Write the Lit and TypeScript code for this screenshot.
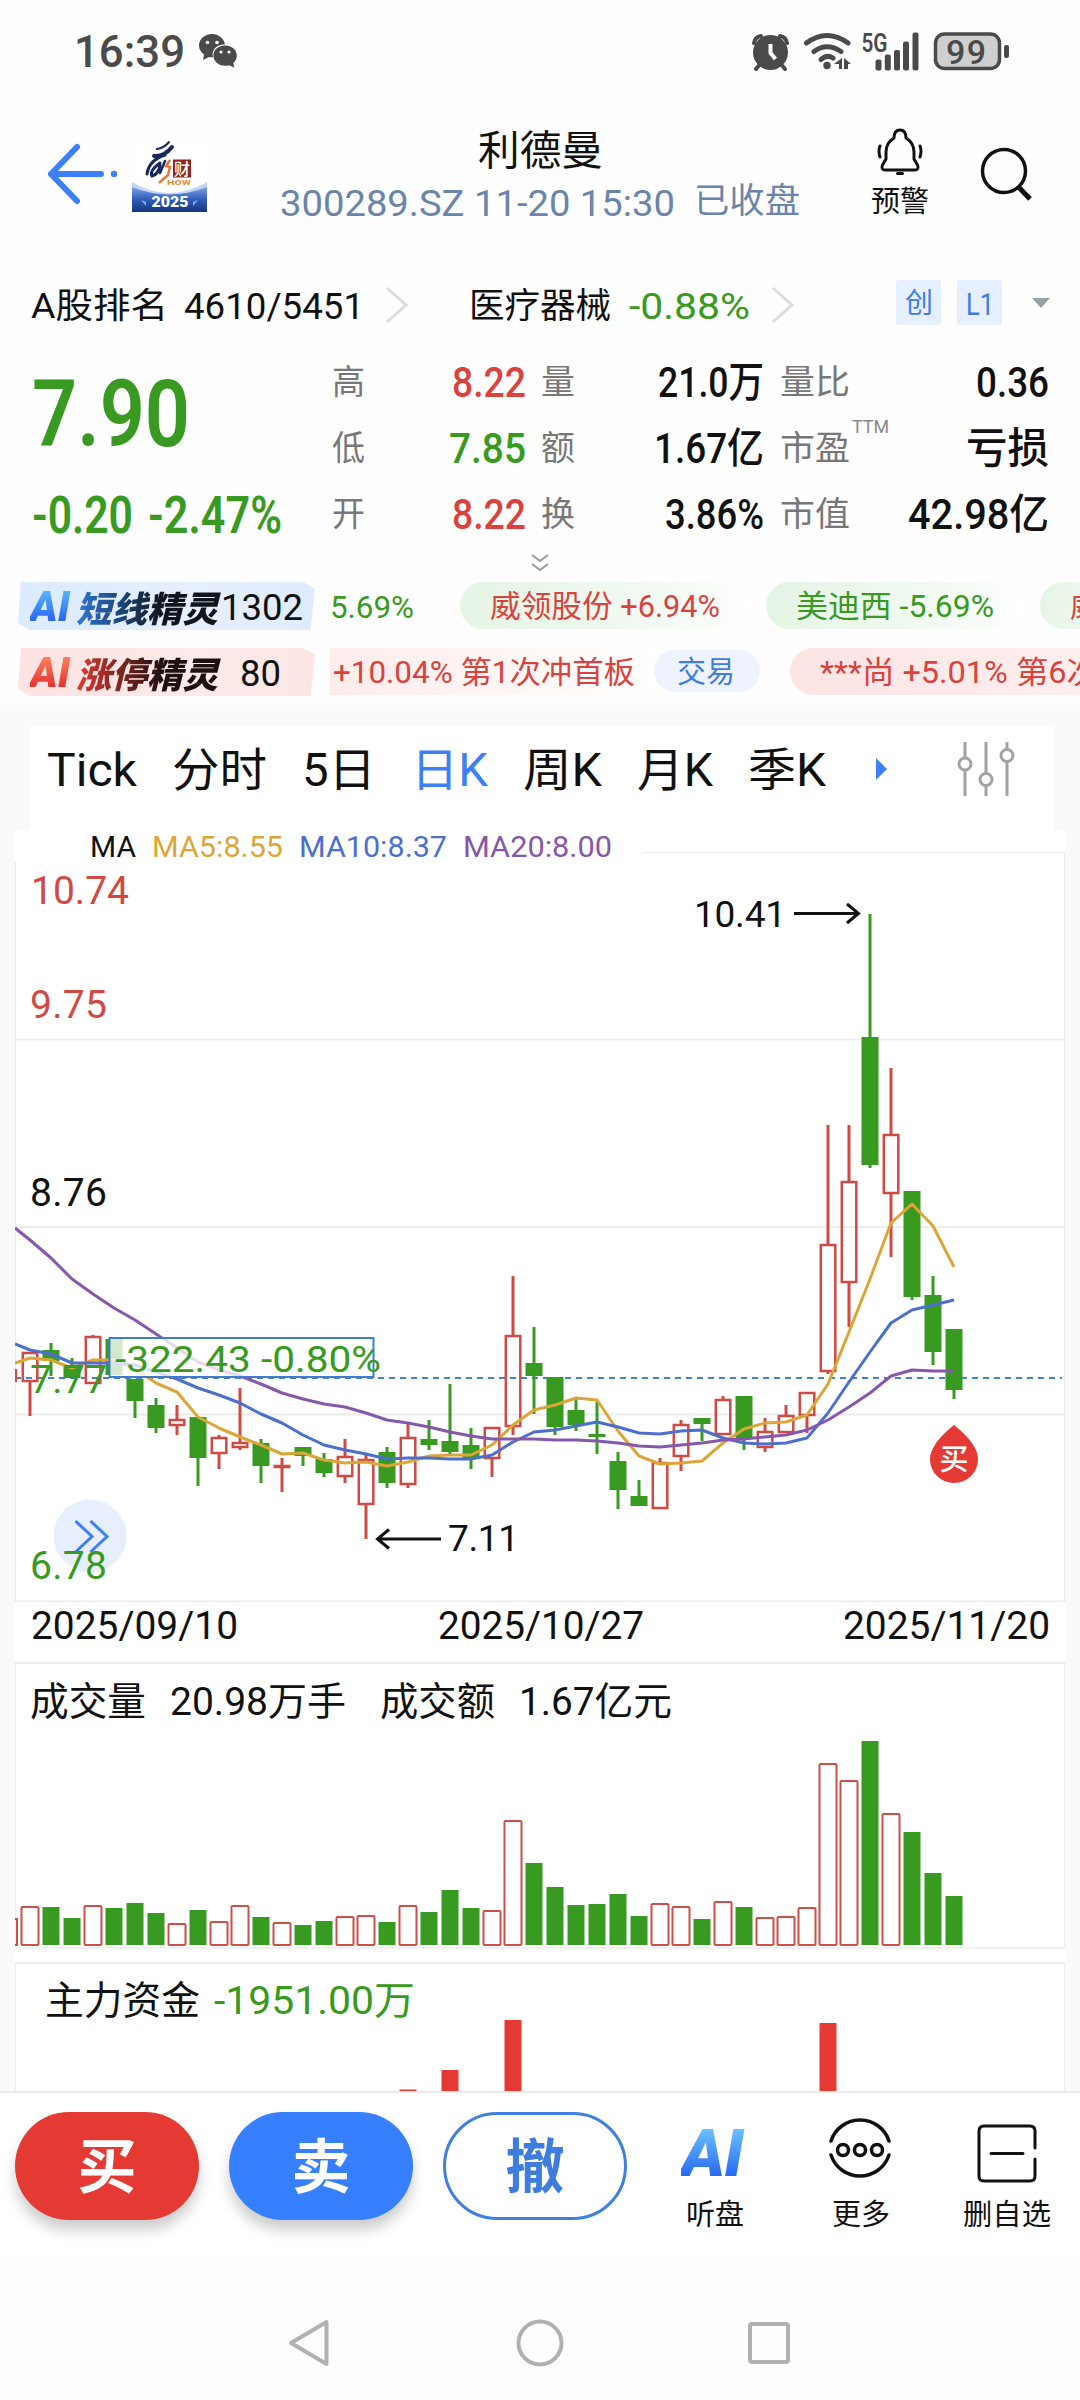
import { html, svg, css, LitElement } from 'lit';
import { customElement, property } from 'lit/decorators.js';

// [up, high, bodyTop, bodyBottom, low] in chart units
type Candle = [number, number, number, number, number];

const FIRST_X = 30;
const STEP = 21;

const CANDLES: Candle[] = [
  [1, 500, 500, 529, 564], [0, 491, 498, 509, 524], [0, 506, 513, 526, 526],
  [1, 483, 484, 531, 531], [0, 487, 487, 523, 523], [0, 527, 527, 549, 566],
  [0, 546, 553, 576, 581], [1, 553, 567, 573, 583], [0, 565, 565, 606, 634],
  [1, 583, 585, 601, 617], [1, 536, 590, 595, 598], [0, 587, 591, 614, 631],
  [1, 606, 613, 615, 640], [0, 595, 595, 604, 614], [0, 601, 607, 621, 625],
  [1, 587, 604, 624, 631], [1, 601, 607, 652, 687], [0, 595, 600, 631, 636],
  [1, 572, 585, 632, 636], [0, 568, 587, 593, 598], [0, 532, 589, 600, 602],
  [0, 576, 593, 606, 617], [1, 575, 575, 606, 625], [1, 424, 483, 574, 583],
  [0, 475, 511, 524, 562], [0, 525, 525, 575, 583], [0, 546, 558, 573, 579],
  [0, 550, 582, 585, 602], [0, 600, 609, 638, 657], [0, 628, 644, 654, 654],
  [1, 606, 610, 656, 657], [1, 568, 572, 604, 619], [0, 566, 566, 572, 589],
  [1, 544, 547, 582, 582], [0, 544, 544, 587, 598], [1, 566, 579, 595, 600],
  [1, 553, 563, 580, 580], [1, 540, 540, 563, 581], [1, 273, 392, 519, 522],
  [1, 273, 329, 430, 475], [0, 62, 185, 313, 316], [1, 216, 282, 341, 405],
  [0, 339, 339, 445, 448], [0, 424, 443, 500, 513], [0, 477, 477, 538, 547],
];

const MA5 = [506, 508, 516, 508, 508, 517, 531, 540, 565, 576, 585, 593, 602, 601, 608, 611, 610, 614, 610, 604, 603, 603, 593, 573, 558, 553, 546, 548, 579, 604, 612, 611, 609, 591, 577, 571, 570, 563, 532, 480, 427, 371, 352, 374, 415];
const MA10 = [498, 502, 511, 511, 511, 513, 520, 527, 536, 543, 551, 562, 571, 583, 593, 598, 602, 607, 606, 606, 607, 607, 603, 590, 580, 578, 574, 570, 575, 581, 582, 579, 578, 586, 591, 592, 591, 586, 561, 530, 500, 471, 458, 453, 448];
const MA20 = [388, 406, 427, 442, 456, 468, 482, 496, 510, 518, 524, 532, 541, 547, 552, 555, 561, 568, 571, 575, 580, 584, 587, 587, 587, 588, 588, 589, 591, 594, 595, 593, 591, 588, 587, 585, 583, 578, 568, 555, 541, 524, 518, 519, 519];

const VOLUMES = [39, 38, 27, 40, 37, 42, 32, 22, 35, 24, 40, 28, 23, 20, 24, 29, 30, 23, 40, 33, 55, 37, 35, 125, 82, 58, 40, 41, 51, 29, 42, 39, 26, 44, 38, 28, 29, 38, 182, 165, 204, 132, 113, 72, 49];

const FUNDS: Array<[number, number]> = [[18, 1.5], [20, 21], [23, 71], [38, 68]];

const TABS: Array<[string, number]> = [
  ['Tick', 90], ['分时', 95], ['5日', 74], ['日K', 77], ['周K', 79], ['月K', 76], ['季K', 78],
];

const xAt = (i: number) => FIRST_X + STEP * i;

const line = (start: number, values: number[]) =>
  `15,${start} ` + values.map((v, i) => `${xAt(i)},${v}`).join(' ');

// Text set to an exact width
const fit = (text: string, width: number, size: number, cls = '') => html`
  <svg class="fit ${cls}" width=${width} height=${Math.round(size * 1.2)}>
    <text x="0" y=${size * 0.955} font-size=${size} textLength=${width} lengthAdjust="spacingAndGlyphs">${text}</text>
  </svg>
`;

const fitStyles = css`
  .fit {
    display: block;
    flex: none;
    overflow: visible;
    fill: currentColor;
  }

  .red {
    color: #d9423d;
  }

  .green {
    color: #389a20;
  }

  .bold {
    font-weight: 600;
  }

  .medium {
    font-weight: 500;
  }
`;

@customElement('status-bar')
export class StatusBar extends LitElement {
  static override styles = [fitStyles, css`
    :host {
      display: flex;
      align-items: center;
      height: 101px;
      padding: 0 70px 0 74px;
      box-sizing: border-box;
      color: #4a4a4a;
    }

    .wechat {
      margin-left: 14px;
    }

    .icons {
      margin-left: auto;
      overflow: visible;
    }

    svg {
      display: block;
    }
  `];

  override render() {
    return html`
      ${fit('16:39', 111, 43.5, 'medium')}
      <svg class="wechat" width="38" height="34" viewBox="0 0 38 34" fill="#4a4a4a">
        <path d="M13 0C5.800 0 0 5 0 11.500c0 3.700 1.900 6.800 5 9L4 26l6-3c1.300.3 2.500.4 4 .3C12 16 18 10 26 10.500 25 4.500 19.500 0 13 0z"/>
        <path d="M26 11.500c-6.500 0-11.600 4.300-11.600 10S19.500 31.800 26 31.800c1.400 0 2.800-.2 4-.6l5.300 2.300-1-4.200c2.200-2 3.500-4.700 3.500-7.800 0-5.700-5.200-10-11.800-10z"/>
        <g fill="#fff"><circle cx="8.500" cy="8.500" r="1.800"/><circle cx="18" cy="8.500" r="1.800"/><circle cx="22" cy="18" r="1.600"/><circle cx="30" cy="18" r="1.600"/></g>
      </svg>
      <svg class="icons" width="258" height="40" viewBox="752 30 258 40" fill="#4a4a4a">
        <g fill="none" stroke="#4a4a4a" stroke-width="4" stroke-linecap="round">
          <path d="M754 42q1-6 7-7M787 42q-1-6-7-7M761 62l-5 6M780 62l5 6"/>
        </g>
        <circle cx="770.500" cy="51.500" r="17.500"/>
        <path d="M770.500 43v9l5 6" fill="none" stroke="#fff" stroke-width="4"/>
        <g fill="none" stroke="#4a4a4a" stroke-width="5" stroke-linecap="round">
          <path d="M806.500 42Q827 27 848 42M814 50.500Q827 41 841 50.500M821 58.500Q827 53 833 57"/>
        </g>
        <circle cx="827" cy="64.500" r="3.700"/>
        <path d="M842 57v11h-3v-5h-5zM844 57l7 6h-3v5h-4z"/>
        <text class="bold" x="861.500" y="50.500" font-size="25" textLength="26" lengthAdjust="spacingAndGlyphs">5G</text>
        <rect x="875.500" y="58.500" width="6" height="11" rx="2"/>
        <rect x="884.800" y="53.500" width="6" height="16" rx="2"/>
        <rect x="894" y="49" width="6" height="20.500" rx="2"/>
        <rect x="903" y="40.500" width="6" height="29" rx="2"/>
        <rect x="912.500" y="31.500" width="6" height="38" rx="2"/>
        <rect x="935.500" y="33" width="64" height="34.500" rx="9" fill="#cfcfcf" stroke="#4a4a4a" stroke-width="3.500"/>
        <rect x="1004" y="44" width="5" height="13" rx="2"/>
        <text class="medium" x="946" y="62.500" font-size="34" textLength="40">99</text>
      </svg>
    `;
  }
}

@customElement('stock-header')
export class StockHeader extends LitElement {
  static override styles = [fitStyles, css`
    :host {
      display: flex;
      align-items: center;
      height: 149px;
      padding: 0 48px 0 46px;
      box-sizing: border-box;
    }

    .back,
    .search {
      margin-bottom: 3px;
    }

    .logo {
      margin-left: 14px;
    }

    .title {
      display: flex;
      flex-direction: column;
      align-items: center;
      gap: 5px;
      margin: 0 auto 0 73px;
    }

    .sub {
      display: flex;
      gap: 19px;
      color: #6b84a9;
    }

    .alarm {
      display: flex;
      flex-direction: column;
      align-items: center;
      gap: 9px;
      margin: 0 51px 5px 0;
    }
  `];

  override render() {
    return html`
      <svg class="back" width="72" height="62" viewBox="0 0 72 62" fill="none" stroke="#3b80f6" stroke-width="6" stroke-linecap="round" stroke-linejoin="round">
        <path d="M31 4L5 31l26 27M5 31h50"/>
        <circle cx="68" cy="31" r="3.200" fill="#3b80f6" stroke="none"/>
      </svg>
      <svg class="logo" width="75" height="72" viewBox="0 0 75 72">
        <defs>
          <linearGradient id="sea" x1="0" y1="0" x2="0" y2="1">
            <stop offset="0" stop-color="#7f9fe0"/>
            <stop offset=".5" stop-color="#2f5dbd"/>
            <stop offset="1" stop-color="#15357c"/>
          </linearGradient>
        </defs>
        <rect width="75" height="72" fill="#fff"/>
        <path d="M0 42Q37 64 75 42V72H0z" fill="#c3d5f5"/>
        <path d="M0 47Q37 62 75 47V72H0z" fill="url(#sea)"/>
        <g fill="none" stroke="#16285c" stroke-linecap="round">
          <path d="M25 9Q32 8 37 2" stroke-width="2"/>
          <path d="M22 16Q32 17 40 7" stroke-width="4"/>
          <path d="M33 15Q17 20 15 34M28 23Q17 31 20 36Q27 34 28 25" stroke-width="3"/>
          <path d="M33 21L28 33" stroke-width="2.500"/>
        </g>
        <path d="M38 20l-4 6 4 1-2 8-9 8" fill="none" stroke="#e27b35" stroke-width="2.500"/>
        <rect x="41" y="19.500" width="18" height="18" fill="#8b2522"/>
        <text x="42" y="34.500" font-size="16" font-weight="500" fill="#fff">财</text>
        <text x="35" y="45" font-size="8" font-weight="700" textLength="24" lengthAdjust="spacingAndGlyphs" fill="#e08a3a">HOW</text>
        <text x="19.500" y="67" font-size="14" font-weight="900" textLength="37" lengthAdjust="spacingAndGlyphs" fill="#fff">2025</text>
        <path d="M9 60l5 2v4zM66 60l-5 2v4z" fill="#8fb0ee"/>
      </svg>
      <div class="title">
        ${fit('利德曼', 125, 41)}
        <div class="sub">
          ${fit('300289.SZ 11-20 15:30', 395, 37.5)}
          ${fit('已收盘', 106, 35)}
        </div>
      </div>
      <div class="alarm">
        <svg width="46" height="47" viewBox="0 0 46 47" fill="none" stroke="#111" stroke-width="3" stroke-linecap="round" stroke-linejoin="round">
          <path d="M17 10Q17 2 23 2t6 8q8 5 8 14v7l3.500 6q2 5-3 5h-29q-5 0-3-5L9 31v-7q0-9 8-14z"/>
          <path d="M3 18q-2 5 0 11M43 18q2 5 0 11M20.500 45.500h5"/>
        </svg>
        ${fit('预警', 58, 29)}
      </div>
      <svg class="search" width="52" height="54" viewBox="0 0 52 54" fill="none" stroke="#111">
        <circle cx="24" cy="24" r="21.500" stroke-width="3.500"/>
        <path d="M38.500 40L50 52" stroke-width="5"/>
      </svg>
    `;
  }
}

@customElement('quote-board')
export class QuoteBoard extends LitElement {
  static override styles = [fitStyles, css`
    .rank {
      display: flex;
      align-items: center;
      height: 99px;
      padding: 11px 30px 0 31px;
      box-sizing: border-box;
      color: #111;
    }

    .chevron {
      margin-left: 21px;
    }

    .rank-value {
      margin-left: 16px;
    }

    .sector {
      margin-left: 60px;
    }

    .sector-value {
      margin-left: 18px;
    }

    .tag {
      display: flex;
      align-items: center;
      justify-content: center;
      width: 45px;
      height: 45px;
      margin: 0 16px 5px 0;
      border-radius: 3px;
      background: #e6effd;
      color: #3d7de0;
    }

    .tags {
      display: flex;
      margin-left: auto;
    }

    .caret {
      margin: 0 0 4px 14px;
    }

    .quote {
      display: grid;
      grid-template-columns: 300px 194px 15px 223px 16px 269px;
      padding-left: 32px;
    }

    .price {
      display: flex;
      flex-direction: column;
      gap: 15px;
      padding-top: 8px;
    }

    .change {
      display: flex;
      gap: 15px;
    }

    .col {
      display: flex;
      flex-direction: column;
    }

    .cell {
      display: flex;
      align-items: center;
      height: 66px;
    }

    .cell .label {
      color: #777;
    }

    .cell .value {
      margin-left: auto;
    }

    .ttm {
      align-self: flex-start;
      margin: 1px 0 0 2px;
      color: #888;
    }

    .more {
      display: flex;
      justify-content: center;
      height: 35px;
      padding-top: 6px;
      box-sizing: border-box;
    }
  `];

  private cell(label: string, labelWidth: number, value: string, width: number, color = '', note = '') {
    return html`
      <div class="cell">
        ${fit(label, labelWidth, 34, 'label')}
        ${note ? fit(note, 37, 18, 'ttm') : ''}
        ${fit(value, width, /^[\d.%]+$/.test(value) ? 43 : 42, `value medium ${color}`)}
      </div>
    `;
  }

  private chevron() {
    return html`
      <svg class="chevron" width="24" height="38" viewBox="0 0 24 38" fill="none" stroke="#dcdcdc" stroke-width="3">
        <path d="M2 2l19 17L2 36"/>
      </svg>
    `;
  }

  override render() {
    return html`
      <div class="rank">
        ${fit('A股排名', 137, 35.5)}
        <div class="rank-value">${fit('4610/5451', 180, 37.5)}</div>
        ${this.chevron()}
        <div class="sector">${fit('医疗器械', 142, 35.5)}</div>
        <div class="sector-value">${fit('-0.88%', 121, 37.5, 'green')}</div>
        ${this.chevron()}
        <div class="tags">
          <div class="tag">${fit('创', 28, 28)}</div>
          <div class="tag">${fit('L1', 28, 32)}</div>
        </div>
        <svg class="caret" width="18" height="10" viewBox="0 0 18 10"><path d="M0 0h18L9 10z" fill="#9a9fa4"/></svg>
      </div>
      <div class="quote">
        <div class="price green">
          ${fit('7.90', 158, 93, 'bold')}
          <div class="change">
            ${fit('-0.20', 101, 51, 'bold')}
            ${fit('-2.47%', 134, 51, 'bold')}
          </div>
        </div>
        <div class="col">
          ${this.cell('高', 33, '8.22', 74, 'red bold')}
          ${this.cell('低', 33, '7.85', 77, 'green bold')}
          ${this.cell('开', 33, '8.22', 74, 'red bold')}
        </div>
        <span></span>
        <div class="col">
          ${this.cell('量', 34, '21.0万', 106)}
          ${this.cell('额', 34, '1.67亿', 110)}
          ${this.cell('换', 34, '3.86%', 99, 'bold')}
        </div>
        <span></span>
        <div class="col">
          ${this.cell('量比', 70, '0.36', 73, 'bold')}
          ${this.cell('市盈', 70, '亏损', 83, '', 'TTM')}
          ${this.cell('市值', 70, '42.98亿', 141)}
        </div>
      </div>
      <div class="more">
        <svg width="18" height="20" viewBox="0 0 18 20" fill="none" stroke="#9a9a9a" stroke-width="2">
          <path d="M1 2l8 6 8-6M1 11l8 6 8-6"/>
        </svg>
      </div>
    `;
  }
}

@customElement('ai-ticker')
export class AiTicker extends LitElement {
  static override styles = [fitStyles, css`
    :host {
      display: flex;
      flex-direction: column;
      gap: 18px;
      padding: 0 0 9px 18px;
      overflow: hidden;
    }

    .row {
      display: flex;
      height: 48px;
    }

    .badge {
      display: flex;
      align-items: center;
      flex: none;
      width: 297px;
      margin-right: 15px;
      padding-left: 12px;
      box-sizing: border-box;
      background: linear-gradient(90deg, #dcebff, #e6effe 60%, #dfebff);
      clip-path: polygon(1% 0, 96% 0, 100% 14%, 98.5% 100%, 4% 100%, 0 85%);
    }

    .badge.hot {
      background: linear-gradient(90deg, #fde3e1, #fdeae9 60%, #fde7e5);
    }

    .ai,
    .name {
      font-style: italic;
      font-weight: 900;
      color: transparent;
      -webkit-background-clip: text;
      background-clip: text;
      white-space: nowrap;
    }

    .ai {
      width: 46px;
      font-size: 42px;
      background-image: linear-gradient(180deg, #55b4fb 20%, #2a62f0 80%);
    }

    .name {
      width: 145px;
      font-size: 35.5px;
      background-image: linear-gradient(90deg, #2f78d8, #10141c 60%);
    }

    .hot .ai {
      background-image: linear-gradient(180deg, #ff7c5c 20%, #e5322f 80%);
    }

    .hot .name {
      background-image: linear-gradient(90deg, #e03a34, #1c1110 60%);
    }

    .badge.hot .fit {
      margin-left: 19px;
    }

    .stream {
      display: flex;
      flex: 1;
      overflow: hidden;
    }

    .pill {
      display: flex;
      align-items: center;
      flex: none;
      height: 47px;
      padding: 0 30px;
      box-sizing: border-box;
      border-radius: 24px;
      background: linear-gradient(90deg, #e5f4e5, #f3faf3 70%, #fff);
    }

    .pill + .pill {
      margin-left: 16px;
    }

    .pill.cut {
      border-radius: 0;
      padding-left: 0;
      background: none;
    }

    .hot .pill {
      background: linear-gradient(90deg, #fde5e4, #fdf0ef);
    }

    .hot .pill.cut {
      padding: 0 20px 0 3px;
      background: linear-gradient(90deg, #fdecea, #fff);
    }

    .hot .pill.trade {
      height: 42px;
      margin: 2px 14px 0 -1px;
      padding: 0 25px 0 23px;
      background: #eff3fd;
      color: #3d7de0;
    }
  `];

  override render() {
    return html`
      <div class="row">
        <div class="badge">
          <span class="ai">AI</span><span class="name">短线精灵</span>
          ${fit('1302', 82, 37.5)}
        </div>
        <div class="stream">
          <div class="pill cut green">${fit('5.69%', 84, 32)}</div>
          <div class="pill red">${fit('威领股份 +6.94%', 230, 31)}</div>
          <div class="pill green">${fit('美迪西 -5.69%', 198, 31)}</div>
          <div class="pill red">${fit('威', 30, 31)}</div>
        </div>
      </div>
      <div class="row hot">
        <div class="badge hot">
          <span class="ai">AI</span><span class="name">涨停精灵</span>
          ${fit('80', 41, 37.5)}
        </div>
        <div class="stream">
          <div class="pill cut red">${fit('+10.04% 第1次冲首板', 302, 31)}</div>
          <div class="pill trade">${fit('交易', 58, 29.5)}</div>
          <div class="pill red">${fit('***尚 +5.01% 第6次', 279, 31)}</div>
        </div>
      </div>
    `;
  }
}

@customElement('k-chart')
export class KChart extends LitElement {
  static override styles = [fitStyles, css`
    :host {
      display: block;
      padding-top: 21px;
      background: #fafafb;
    }

    svg {
      display: block;
    }

    .tabs {
      display: flex;
      align-items: center;
      gap: 35px;
      height: 104px;
      margin: 0 27px 0 30px;
      padding: 0 38px 18px 17px;
      box-sizing: border-box;
      background: #fff;
    }

    .active {
      color: #3b80f6;
    }

    .arrow {
      margin-left: 15px;
    }

    .sliders {
      margin-left: auto;
    }

    .panel {
      margin: 0 15px;
      background: #fff;
    }

    .framed {
      border-top: 2px solid #ececec;
      box-shadow: inset 1px 0 #eee, inset -1px 0 #eee;
    }

    .legend {
      display: flex;
      align-items: center;
      gap: 16px;
      height: 22px;
      padding: 9px 0 0 75px;
      box-sizing: border-box;
    }

    .dates {
      display: flex;
      justify-content: space-between;
      align-items: center;
      height: 60px;
      padding: 0 15px 16px 16px;
      box-sizing: border-box;
    }

    .heading {
      display: flex;
      align-items: center;
      height: 75px;
      padding: 0 0 2px 15px;
      box-sizing: border-box;
    }

    .heading .fit + .fit {
      margin-left: 24px;
    }

    .heading .fit.second {
      margin-left: 34px;
    }

    .funds {
      height: 56px;
      padding: 16px 0 0 30px;
    }

    .heading.funds .fit + .fit {
      margin-left: 14px;
    }

    .gap {
      height: 13px;
      border-top: 2px solid #eef1ee;
    }

    .ma5 {
      color: #dba637;
    }

    .ma10 {
      color: #4c6fce;
    }

    .ma20 {
      color: #8558ab;
    }
  `];

  @property({ type: Number })
  activeTab = 3;

  private candle([up, high, top, bottom, low]: Candle, i: number) {
    const x = xAt(i);
    const color = up ? '#d04a43' : '#389a20';
    return svg`
      <path d="M${x} ${high}V${top}M${x} ${bottom}V${low}" stroke=${color} stroke-width="3"/>
      ${up
        ? svg`<rect x=${x - 7.2} y=${top + 1} width="14.500" height=${Math.max(bottom - top - 1, 0.5)} fill="none" stroke=${color} stroke-width="2.500"/>`
        : svg`<rect x=${x - 8.5} y=${top} width="17" height=${bottom - top} fill=${color}/>`}
    `;
  }

  private volume(height: number, i: number) {
    const x = xAt(i);
    return CANDLES[i][0]
      ? svg`<rect x=${x - 8.5} y=${205 - height} width="17" height=${height - 1} rx="1" fill="#fff" stroke="#cc4f49" stroke-width="2"/>`
      : svg`<rect x=${x - 8.5} y=${204 - height} width="17" height=${height} fill="#389a20"/>`;
  }

  private renderPrices() {
    return html`
      <svg width="1050" height="750" viewBox="15 0 1050 750">
        <g fill="none" stroke="#ececec" stroke-width="2">
          <path d="M15 187.500H1065M15 375H1065M15 562.500H1065M15 749.500H1065"/>
          <path d="M642 .500H1064.500V750M15.500 10V750" stroke-width="1"/>
        </g>
        <path d="M15 526H1062" stroke="#4583c0" stroke-width="2" stroke-dasharray="6 5"/>
        <rect x="3" y="518" width="13" height="11" fill="none" stroke="#d04a43" stroke-width="2"/>
        ${CANDLES.map((c, i) => this.candle(c, i))}
        <g fill="none" stroke-width="3" stroke-linejoin="round">
          <polyline points=${line(511, MA5)} stroke="#dba637"/>
          <polyline points=${line(492, MA10)} stroke="#4c6fce"/>
          <polyline points=${line(376, MA20)} stroke="#8558ab"/>
        </g>
        <rect x="109.500" y="486" width="264" height="39" fill="#fff" fill-opacity=".78" stroke="#3f7cd0" stroke-width="2"/>
        <circle cx="90" cy="684" r="36.500" fill="#e7effd"/>
        <path d="M75.500 669l16.500 15.500L75.500 700M90.500 669l16.500 15.500L90.500 700" fill="none" stroke="#3b80f6" stroke-width="3"/>
        <g font-size="39">
          <text x="31" y="51.500" fill="#d04a43" textLength="98">10.74</text>
          <text x="30" y="166" fill="#d04a43" textLength="77">9.75</text>
          <text x="30" y="353.500" fill="#111" textLength="77">8.76</text>
          <text x="30" y="541" fill="#389a20" textLength="77">7.77</text>
          <text x="30" y="726.500" fill="#389a20" textLength="77">6.78</text>
        </g>
        <g font-size="37">
          <text x="115" y="519.500" fill="#389a20" textLength="266" lengthAdjust="spacingAndGlyphs">-322.43 -0.80%</text>
          <text x="694" y="74.500" fill="#111" textLength="92">10.41</text>
          <text x="448" y="699" fill="#111" textLength="71">7.11</text>
        </g>
        <g fill="none" stroke="#111" stroke-width="3">
          <path d="M794 61.500H858M847 52l11.500 9.500L847 71"/>
          <path d="M441 687H377M389 677.500L377.500 687l11.500 9.500"/>
        </g>
        <path d="M954 573Q978 592 978 607.500A24 23.500 0 0 1 930 607.500Q930 592 954 573z" fill="#e53a34"/>
        <text x="939.500" y="617.500" font-size="29" font-weight="500" fill="#fff">买</text>
      </svg>
    `;
  }

  override render() {
    return html`
      <div class="tabs">
        ${TABS.map(([name, width], i) => fit(name, width, 46, i === this.activeTab ? 'active' : ''))}
        <svg class="arrow" width="11" height="22" viewBox="0 0 11 22"><path d="M0 0l11 11L0 22z" fill="#3b80f6"/></svg>
        <svg class="sliders" width="58" height="56" viewBox="0 0 58 56" fill="#fff" stroke="#a0a2a4" stroke-width="3">
          <path d="M8 1v54M29 1v54M50 1v54"/>
          <circle cx="8" cy="23" r="6"/><circle cx="29" cy="38.500" r="6"/><circle cx="50" cy="14.500" r="6"/>
        </svg>
      </div>
      <div class="panel">
        <div class="legend">
          ${fit('MA', 46, 30)}
          ${fit('MA5:8.55', 131, 30, 'ma5')}
          ${fit('MA10:8.37', 148, 30, 'ma10')}
          ${fit('MA20:8.00', 149, 30, 'ma20')}
        </div>
        ${this.renderPrices()}
        <div class="dates">
          ${fit('2025/09/10', 207, 39.5)}
          ${fit('2025/10/27', 206, 39.5)}
          ${fit('2025/11/20', 207, 39.5)}
        </div>
      </div>
      <div class="panel framed">
        <div class="heading">
          ${fit('成交量', 116, 38.5)}
          ${fit('20.98万手', 176, 38.5)}
          ${fit('成交额', 115, 38.5, 'second')}
          ${fit('1.67亿元', 153, 38.5)}
        </div>
        <svg width="1050" height="208" viewBox="15 -2 1050 208">
          <rect x="3" y="178" width="14" height="26" fill="none" stroke="#cc4f49" stroke-width="2"/>
          ${VOLUMES.map((v, i) => this.volume(v, i))}
        </svg>
      </div>
      <div class="panel gap"></div>
      <div class="panel framed">
        <div class="heading funds">
          ${fit('主力资金', 155, 38.5)}
          ${fit('-1951.00万', 201, 38.5, 'green')}
        </div>
        <svg width="1050" height="71" viewBox="15 0 1050 71">
          ${FUNDS.map(([i, h]) => svg`<rect x=${xAt(i) - 8.5} y=${71 - h} width="17" height=${h} fill="#e53a34"/>`)}
        </svg>
      </div>
    `;
  }
}

@customElement('trade-bar')
export class TradeBar extends LitElement {
  static override styles = [fitStyles, css`
    :host {
      display: flex;
      height: 164px;
      padding: 19px 0 0 15px;
      border-top: 2px solid #e9e9e9;
      box-sizing: border-box;
      background: #fff;
    }

    .btn {
      width: 184px;
      height: 108px;
      margin: 0 30px 0 0;
      padding: 4px 0 0;
      border: none;
      border-radius: 54px;
      font: bold 59px/104px Roboto, "Noto Sans CJK SC", sans-serif;
      color: #fff;
      box-shadow: 0 10px 14px rgba(0, 0, 0, 0.2);
    }

    .buy {
      background: #e53a34;
    }

    .sell {
      background: #367fff;
    }

    .cancel {
      border: 3px solid #3f7fdf;
      background: #fff;
      color: #3d7de0;
      line-height: 98px;
      box-shadow: none;
    }

    .tools {
      display: flex;
      flex: 1;
      justify-content: space-between;
      padding: 0 28px 0 13px;
    }

    .tool {
      display: flex;
      flex-direction: column;
      align-items: center;
      width: 90px;
    }

    .tool svg:not(.fit) {
      display: block;
    }

    .ai-mark {
      height: 85px;
      padding-right: 6px;
      font: italic 900 67px/82px Roboto, sans-serif;
      letter-spacing: -1px;
      color: transparent;
      background-image: linear-gradient(180deg, #6cc4ff 18%, #2465f2 78%);
      -webkit-background-clip: text;
      background-clip: text;
    }
  `];

  override render() {
    return html`
      <button class="btn buy">买</button>
      <button class="btn sell">卖</button>
      <button class="btn cancel">撤</button>
      <div class="tools">
        <div class="tool">
          <span class="ai-mark">AI</span>
          ${fit('听盘', 58, 29)}
        </div>
        <div class="tool">
          <svg width="66" height="85" viewBox="0 0 66 85" fill="none" stroke="#111" stroke-width="3.500" stroke-linecap="round">
            <path d="M3 29A30.500 30.500 0 0 1 61 29M3 43A30.500 30.500 0 0 0 61 43"/>
            <circle cx="15" cy="38" r="5.500"/><circle cx="32" cy="38" r="5.500"/><circle cx="49" cy="38" r="5.500"/>
          </svg>
          ${fit('更多', 58, 29)}
        </div>
        <div class="tool">
          <svg width="62" height="85" viewBox="0 0 62 85" fill="none" stroke="#111" stroke-width="3" stroke-linecap="round">
            <path d="M59 36V19q0-5-5-5H8q-5 0-5 5v45q0 5 5 5h46q5 0 5-5V47M15 41.500h32"/>
          </svg>
          ${fit('删自选', 88, 29)}
        </div>
      </div>
    `;
  }
}

@customElement('app-root')
export class AppRoot extends LitElement {
  static override styles = css`
    :host {
      display: block;
      width: 1080px;
      height: 2400px;
      overflow: hidden;
      background: #fefefe;
      color: #111;
      font-family: Roboto, "Noto Sans CJK SC", sans-serif;
    }

    .nav {
      display: block;
    }
  `;

  override render() {
    return html`
      <status-bar></status-bar>
      <stock-header></stock-header>
      <quote-board></quote-board>
      <ai-ticker></ai-ticker>
      <k-chart></k-chart>
      <trade-bar></trade-bar>
      <svg class="nav" width="1080" height="145" viewBox="0 0 1080 145" fill="none" stroke="#b1b1b1" stroke-width="4" stroke-linejoin="round">
        <path d="M326.500 67v42L291 88z"/>
        <circle cx="540" cy="88" r="21.500"/>
        <rect x="750" y="69" width="38" height="38" rx="2"/>
      </svg>
    `;
  }
}
